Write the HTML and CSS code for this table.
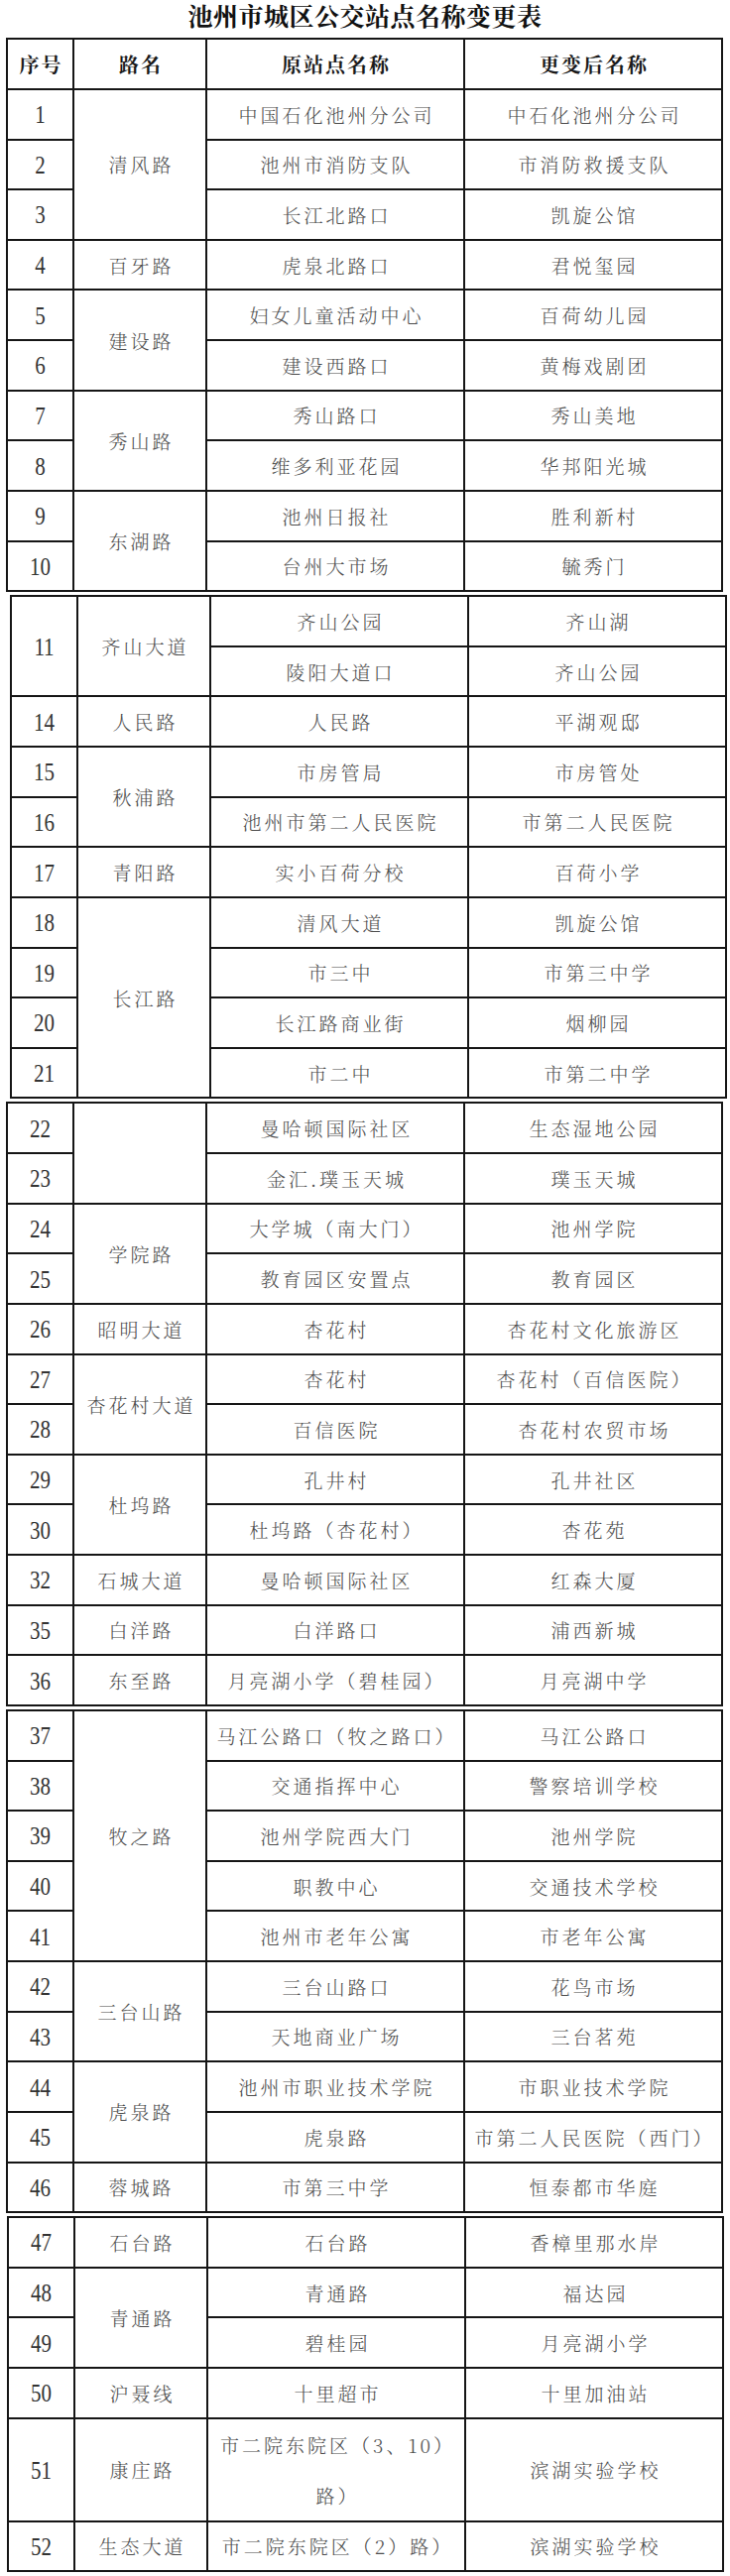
FILE: index.html
```html
<!DOCTYPE html>
<html lang="zh-CN">
<head>
<meta charset="utf-8">
<title>池州市城区公交站点名称变更表</title>
<link rel="stylesheet" href="styles.css">
</head>
<body>
<div class="page">
  <h1 class="title">池州市城区公交站点名称变更表</h1>

  <table class="seg seg1">
    <colgroup><col class="c1"><col class="c2"><col class="c3"><col class="c4"></colgroup>
    <tr class="head"><th>序号</th><th>路名</th><th>原站点名称</th><th>更变后名称</th></tr>
    <tr><td class="n"><span>1</span></td><td class="r" rowspan="3">清风路</td><td>中国石化池州分公司</td><td>中石化池州分公司</td></tr>
    <tr><td class="n"><span>2</span></td><td>池州市消防支队</td><td>市消防救援支队</td></tr>
    <tr><td class="n"><span>3</span></td><td>长江北路口</td><td>凯旋公馆</td></tr>
    <tr><td class="n"><span>4</span></td><td class="r">百牙路</td><td>虎泉北路口</td><td>君悦玺园</td></tr>
    <tr><td class="n"><span>5</span></td><td class="r" rowspan="2">建设路</td><td>妇女儿童活动中心</td><td>百荷幼儿园</td></tr>
    <tr><td class="n"><span>6</span></td><td>建设西路口</td><td>黄梅戏剧团</td></tr>
    <tr><td class="n"><span>7</span></td><td class="r" rowspan="2">秀山路</td><td>秀山路口</td><td>秀山美地</td></tr>
    <tr><td class="n"><span>8</span></td><td>维多利亚花园</td><td>华邦阳光城</td></tr>
    <tr><td class="n"><span>9</span></td><td class="r" rowspan="2">东湖路</td><td>池州日报社</td><td>胜利新村</td></tr>
    <tr><td class="n"><span>10</span></td><td>台州大市场</td><td>毓秀门</td></tr>
  </table>

  <table class="seg seg2">
    <colgroup><col class="c1"><col class="c2"><col class="c3"><col class="c4"></colgroup>
    <tr><td class="n" rowspan="2"><span>11</span></td><td class="r" rowspan="2">齐山大道</td><td>齐山公园</td><td>齐山湖</td></tr>
    <tr><td>陵阳大道口</td><td>齐山公园</td></tr>
    <tr><td class="n"><span>14</span></td><td class="r">人民路</td><td>人民路</td><td>平湖观邸</td></tr>
    <tr><td class="n"><span>15</span></td><td class="r" rowspan="2">秋浦路</td><td>市房管局</td><td>市房管处</td></tr>
    <tr><td class="n"><span>16</span></td><td>池州市第二人民医院</td><td>市第二人民医院</td></tr>
    <tr><td class="n"><span>17</span></td><td class="r">青阳路</td><td>实小百荷分校</td><td>百荷小学</td></tr>
    <tr><td class="n"><span>18</span></td><td class="r" rowspan="4">长江路</td><td>清风大道</td><td>凯旋公馆</td></tr>
    <tr><td class="n"><span>19</span></td><td>市三中</td><td>市第三中学</td></tr>
    <tr><td class="n"><span>20</span></td><td>长江路商业街</td><td>烟柳园</td></tr>
    <tr><td class="n"><span>21</span></td><td>市二中</td><td>市第二中学</td></tr>
  </table>

  <table class="seg seg3">
    <colgroup><col class="c1"><col class="c2"><col class="c3"><col class="c4"></colgroup>
    <tr><td class="n"><span>22</span></td><td class="r" rowspan="2"></td><td>曼哈顿国际社区</td><td>生态湿地公园</td></tr>
    <tr><td class="n"><span>23</span></td><td>金汇.璞玉天城</td><td>璞玉天城</td></tr>
    <tr><td class="n"><span>24</span></td><td class="r" rowspan="2">学院路</td><td>大学城（南大门）</td><td>池州学院</td></tr>
    <tr><td class="n"><span>25</span></td><td>教育园区安置点</td><td>教育园区</td></tr>
    <tr><td class="n"><span>26</span></td><td class="r">昭明大道</td><td>杏花村</td><td>杏花村文化旅游区</td></tr>
    <tr><td class="n"><span>27</span></td><td class="r" rowspan="2">杏花村大道</td><td>杏花村</td><td>杏花村（百信医院）</td></tr>
    <tr><td class="n"><span>28</span></td><td>百信医院</td><td>杏花村农贸市场</td></tr>
    <tr><td class="n"><span>29</span></td><td class="r" rowspan="2">杜坞路</td><td>孔井村</td><td>孔井社区</td></tr>
    <tr><td class="n"><span>30</span></td><td>杜坞路（杏花村）</td><td>杏花苑</td></tr>
    <tr><td class="n"><span>32</span></td><td class="r">石城大道</td><td>曼哈顿国际社区</td><td>红森大厦</td></tr>
    <tr><td class="n"><span>35</span></td><td class="r">白洋路</td><td>白洋路口</td><td>浦西新城</td></tr>
    <tr><td class="n"><span>36</span></td><td class="r">东至路</td><td>月亮湖小学（碧桂园）</td><td>月亮湖中学</td></tr>
  </table>

  <table class="seg seg4">
    <colgroup><col class="c1"><col class="c2"><col class="c3"><col class="c4"></colgroup>
    <tr><td class="n"><span>37</span></td><td class="r" rowspan="5">牧之路</td><td>马江公路口（牧之路口）</td><td>马江公路口</td></tr>
    <tr><td class="n"><span>38</span></td><td>交通指挥中心</td><td>警察培训学校</td></tr>
    <tr><td class="n"><span>39</span></td><td>池州学院西大门</td><td>池州学院</td></tr>
    <tr><td class="n"><span>40</span></td><td>职教中心</td><td>交通技术学校</td></tr>
    <tr><td class="n"><span>41</span></td><td>池州市老年公寓</td><td>市老年公寓</td></tr>
    <tr><td class="n"><span>42</span></td><td class="r" rowspan="2">三台山路</td><td>三台山路口</td><td>花鸟市场</td></tr>
    <tr><td class="n"><span>43</span></td><td>天地商业广场</td><td>三台茗苑</td></tr>
    <tr><td class="n"><span>44</span></td><td class="r" rowspan="2">虎泉路</td><td>池州市职业技术学院</td><td>市职业技术学院</td></tr>
    <tr><td class="n"><span>45</span></td><td>虎泉路</td><td>市第二人民医院（西门）</td></tr>
    <tr><td class="n"><span>46</span></td><td class="r">蓉城路</td><td>市第三中学</td><td>恒泰都市华庭</td></tr>
  </table>

  <table class="seg seg5">
    <colgroup><col class="c1"><col class="c2"><col class="c3"><col class="c4"></colgroup>
    <tr><td class="n"><span>47</span></td><td class="r">石台路</td><td>石台路</td><td>香樟里那水岸</td></tr>
    <tr><td class="n"><span>48</span></td><td class="r" rowspan="2">青通路</td><td>青通路</td><td>福达园</td></tr>
    <tr><td class="n"><span>49</span></td><td>碧桂园</td><td>月亮湖小学</td></tr>
    <tr><td class="n"><span>50</span></td><td class="r">沪聂线</td><td>十里超市</td><td>十里加油站</td></tr>
    <tr class="tall"><td class="n"><span>51</span></td><td class="r">康庄路</td><td class="wrap">市二院东院区（3、10）<br>路）</td><td>滨湖实验学校</td></tr>
    <tr><td class="n"><span>52</span></td><td class="r">生态大道</td><td>市二院东院区（2）路）</td><td>滨湖实验学校</td></tr>
  </table>
</div>
</body>
</html>
```

FILE: styles.css
```css
html, body {
  margin: 0;
  padding: 0;
  background: #ffffff;
}

.page {
  width: 736px;
  padding-bottom: 4px;
}

.title {
  margin: 0;
  height: 38.3px;
  line-height: 30px;
  text-align: center;
  font-family: "Noto Serif CJK SC", "Noto Sans CJK SC", serif;
  font-size: 25px;
  font-weight: 700;
  color: #111;
  letter-spacing: 0.5px;
}

.seg {
  border-collapse: collapse;
  table-layout: fixed;
  width: 721px;
  font-family: "Noto Serif CJK SC", "Noto Sans CJK SC", sans-serif;
}

.seg1 { margin-left: 6px; }
.seg2 { margin-left: 10px; margin-top: 3px; }
.seg3 { margin-left: 6px; margin-top: 3px; }
.seg4 { margin-left: 6px; margin-top: 3px; }
.seg5 { margin-left: 7px; margin-top: 3px; }

.c1 { width: 67px; }
.c2 { width: 134px; }
.c3 { width: 260px; }
.c4 { width: 260px; }

.seg tr { height: 50.63px; }
.seg tr.tall { height: 101px; }

.seg th,
.seg td {
  border: 2px solid #161616;
  padding: 0 0 0 3px;
  text-align: center;
  vertical-align: middle;
  white-space: nowrap;
}

.seg th {
  font-size: 20px;
  font-weight: 700;
  color: #1a1a1a;
  letter-spacing: 2px;
  padding-left: 2px;
}

.seg td {
  font-size: 19px;
  font-weight: 300;
  color: #4d4d4d;
  letter-spacing: 3px;
}

.seg td.n {
  padding-left: 0;
  letter-spacing: 0;
}

.seg td.n span {
  display: inline-block;
  font-family: "Liberation Serif", "Times New Roman", serif;
  font-size: 21px;
  color: #333;
  transform: scaleY(1.22);
}

.seg td.wrap {
  white-space: normal;
  line-height: 51px;
}
```
